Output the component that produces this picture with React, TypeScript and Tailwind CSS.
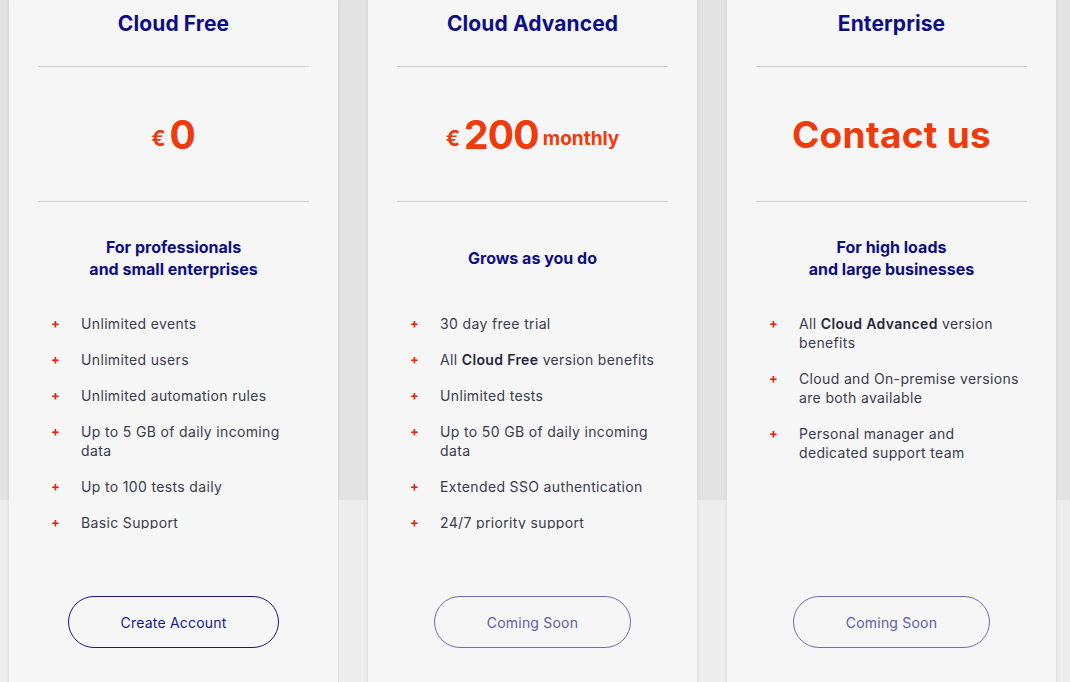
import React from "react";

type Feature = { pre?: string; bold?: string; post?: string };

type Plan = {
  title: string;
  price: React.ReactNode;
  subtitle: string[];
  features: Feature[];
  cta: string;
  primary?: boolean;
};

const plans: Plan[] = [
  {
    title: "Cloud Free",
    price: (
      <>
        <span className="text-[21px] mr-[4px] relative top-[4px]">€</span>
        <span className="text-[39px]">0</span>
      </>
    ),
    subtitle: ["For professionals", "and small enterprises"],
    features: [
      { pre: "Unlimited events" },
      { pre: "Unlimited users" },
      { pre: "Unlimited automation rules" },
      { pre: "Up to 5 GB of daily incoming data" },
      { pre: "Up to 100 tests daily" },
      { pre: "Basic Support" },
    ],
    cta: "Create Account",
    primary: true,
  },
  {
    title: "Cloud Advanced",
    price: (
      <>
        <span className="text-[21px] mr-[4px] relative top-[4px]">€</span>
        <span className="text-[39px] tracking-[-0.8px]">200</span>
        <span className="text-[19px] ml-[4px] relative top-[4px]">monthly</span>
      </>
    ),
    subtitle: ["Grows as you do"],
    features: [
      { pre: "30 day free trial" },
      { pre: "All ", bold: "Cloud Free", post: " version benefits" },
      { pre: "Unlimited tests" },
      { pre: "Up to 50 GB of daily incoming data" },
      { pre: "Extended SSO authentication" },
      { pre: "24/7 priority support" },
    ],
    cta: "Coming Soon",
  },
  {
    title: "Enterprise",
    price: <span className="text-[37px] tracking-[0.3px]">Contact us</span>,
    subtitle: ["For high loads", "and large businesses"],
    features: [
      { pre: "All ", bold: "Cloud Advanced", post: " version benefits" },
      { pre: "Cloud and On-premise versions are both available" },
      { pre: "Personal manager and dedicated support team" },
    ],
    cta: "Coming Soon",
  },
];

function PlanCard({ plan }: { plan: Plan }) {
  return (
    <div className="w-[329px] bg-[#f6f6f6] shadow-[0_0_3px_rgba(0,0,0,0.12)] flex flex-col">
      <div className="h-[48px] flex items-center justify-center text-[21px] font-bold text-[#0d0d85] tracking-[0.1px]">
        {plan.title}
      </div>
      <div className="mx-[29px] mt-[18px] border-t border-[#d2d2d6]" />
      <div className="h-[134px] flex items-center justify-center font-bold text-[#ee3a0c] leading-none">
        {plan.price}
      </div>
      <div className="mx-[29px] border-t border-[#d2d2d6]" />
      <div className="h-[112px] flex flex-col items-center justify-center text-[16px] leading-[22px] font-bold text-[#0d0d85]">
        {plan.subtitle.map((s) => (
          <div key={s}>{s}</div>
        ))}
      </div>
      {/* list is clipped at the bottom like on the original page */}
      <ul className="h-[215px] overflow-hidden pl-[42px] pr-[30px] flex flex-col gap-[17px] text-[14px] tracking-[0.35px] leading-[19px] text-[#3a3b4c]">
        {plan.features.map((f, i) => (
          <li key={i} className="flex">
            <span className="w-[30px] shrink-0 text-[#e0260a] text-[13px] font-bold tracking-normal">+</span>
            <span className="max-w-[222px]">
              {f.pre}
              {f.bold && <b className="font-semibold text-[#26273a]">{f.bold}</b>}
              {f.post}
            </span>
          </li>
        ))}
      </ul>
      <div className="mt-[67px] flex justify-center pb-[40px]">
        <button
          className={
            plan.primary
              ? "h-[52px] px-[52px] rounded-full border-[1.5px] border-[#16168a] text-[#16168a] text-[14px] tracking-[0.2px] bg-transparent"
              : "h-[52px] px-[52px] rounded-full border-[1.5px] border-[#6e6eb0] text-[#5c5ca6] text-[14px] tracking-[0.2px] bg-transparent"
          }
        >
          {plan.cta}
        </button>
      </div>
    </div>
  );
}

export default function App() {
  return (
    <div
      className="w-[1070px] h-[682px] overflow-hidden bg-[linear-gradient(to_bottom,#e3e3e3_0,#e3e3e3_500px,#ededed_500px)]"
      style={{ fontFamily: "Inter, 'Noto Sans', sans-serif" }}
    >
      <div className="flex gap-[30px] pl-[9px]">
        {plans.map((p) => (
          <PlanCard key={p.title} plan={p} />
        ))}
      </div>
    </div>
  );
}
